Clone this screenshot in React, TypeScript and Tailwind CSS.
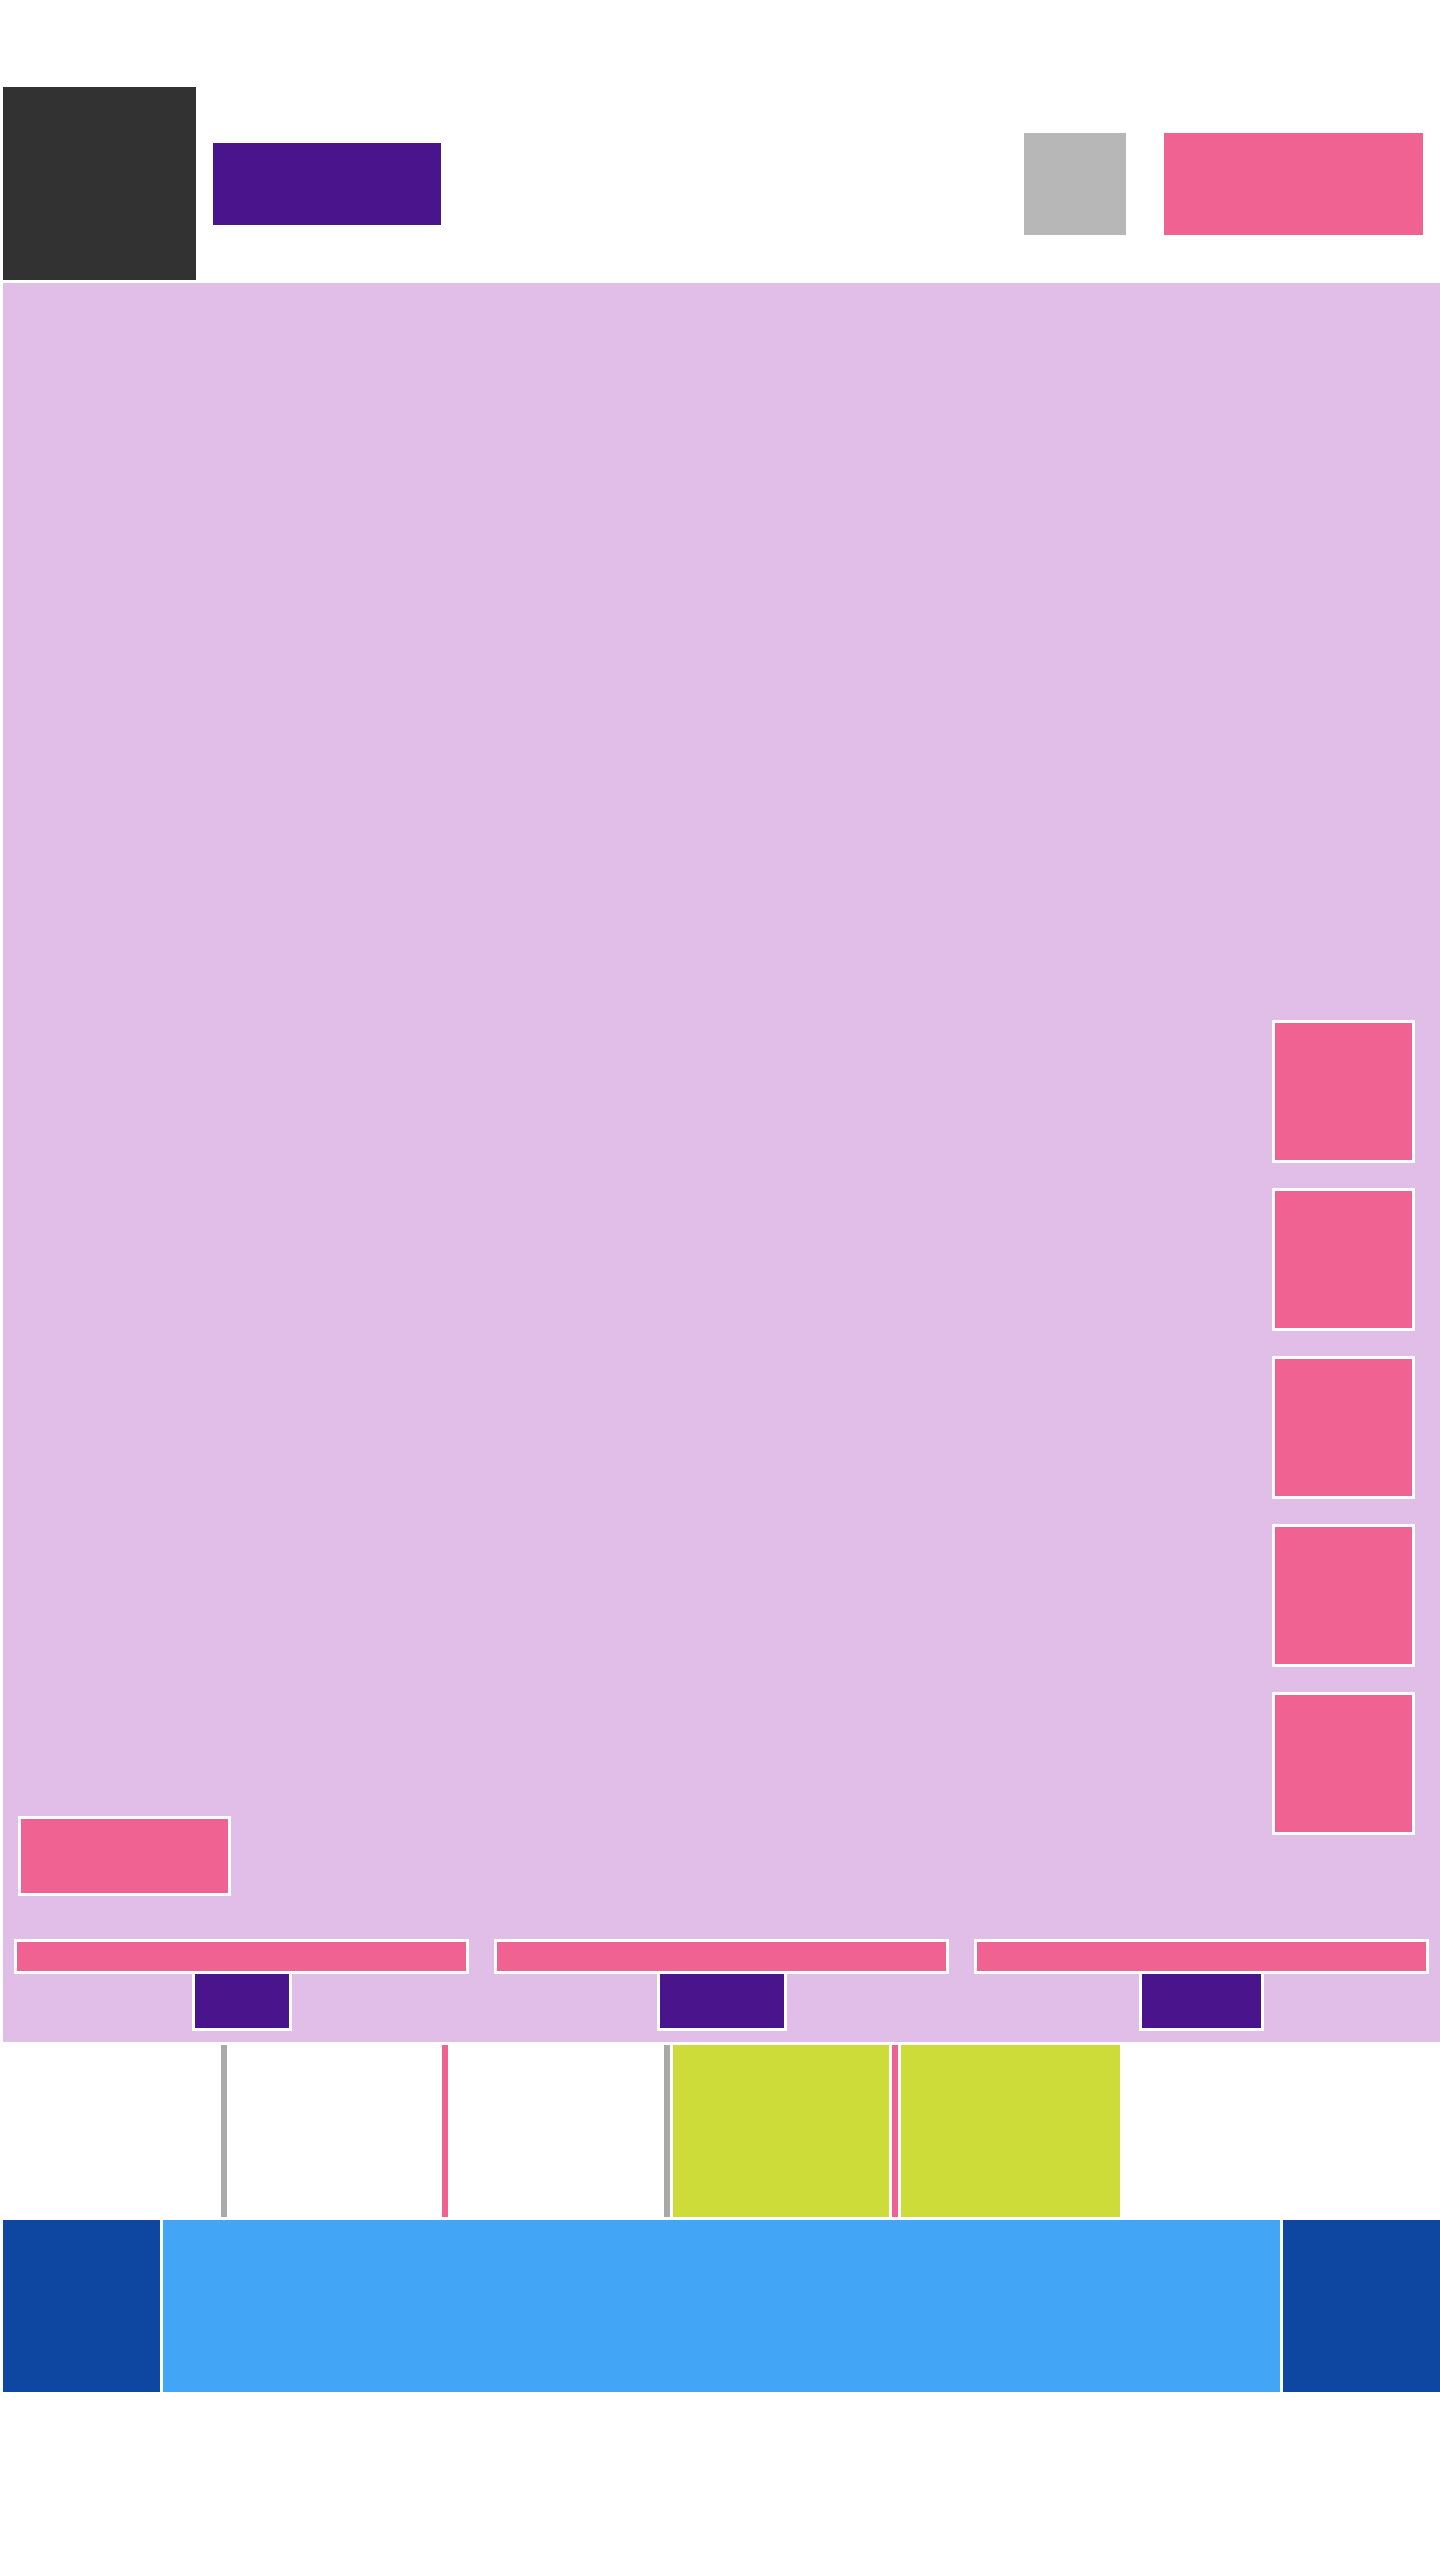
import React from 'react';

// Colour blocks laid out as a wireframe
const SQUARES = [0, 1, 2, 3, 4];
const BARS = [
  { id: 'a', tab: 'w-[100px]' },
  { id: 'b', tab: 'w-[130px]' },
  { id: 'c', tab: 'w-[125px]' },
];

function Header() {
  return (
    <div className="flex items-center h-[193px]">
      <div className="w-[193px] h-[193px] bg-[#323232] shrink-0" />
      <div className="ml-[17px] w-[228px] h-[82px] bg-[#4a148c]" />
      <div className="ml-auto w-[102px] h-[102px] bg-[#b7b7b7]" />
      <div className="ml-[38px] mr-[17px] w-[259px] h-[102px] bg-[#f06292]" />
    </div>
  );
}

function Stage() {
  return (
    <div className="bg-[#e1bee7] h-[1759px] flex flex-col pt-[737px]">
      <div className="flex items-start justify-between pl-[15px] pr-[25px]">
        <div className="mt-[796px] w-[213px] h-[80px] bg-[#f06292] border-[3px] border-white" />
        <div className="flex flex-col gap-[25px]">
          {SQUARES.map((i) => (
            <div key={i} className="w-[143px] h-[143px] bg-[#f06292] border-[3px] border-white" />
          ))}
        </div>
      </div>

      {/* bottom tabs */}
      <div className="mt-[43px] px-[11px] flex gap-[25px]">
        {BARS.map((b) => (
          <div key={b.id} className="flex-1 flex flex-col items-center">
            <div className="w-full h-[35px] bg-[#f06292] border-[3px] border-white" />
            <div className={`${b.tab} h-[57px] bg-[#4a148c] border-[3px] border-t-0 border-white`} />
          </div>
        ))}
      </div>
    </div>
  );
}

function Strip() {
  return (
    <div className="h-[172px] flex bg-white">
      <div className="ml-[218px] w-[6px] bg-[#aaaaaa]" />
      <div className="ml-[215px] w-[6px] bg-[#f06292]" />
      <div className="ml-[216px] w-[6px] bg-[#a8a8a8]" />
      <div className="ml-[3px] w-[216px] bg-[#cddc39]" />
      <div className="ml-[3px] w-[6px] bg-[#f06292]" />
      <div className="ml-[3px] w-[219px] bg-[#cddc39]" />
    </div>
  );
}

function Footer() {
  return (
    <div className="h-[172px] flex gap-[3px]">
      <div className="w-[157px] bg-[#0d47a1]" />
      <div className="flex-1 bg-[#42a5f5]" />
      <div className="w-[157px] bg-[#0d47a1]" />
    </div>
  );
}

export default function App() {
  return (
    <div className="min-h-[2560px] w-[1440px] bg-white pl-[3px] pt-[87px] font-['Liberation_Sans',sans-serif]">
      <div className="flex flex-col gap-[3px]">
        <Header />
        <Stage />
        <Strip />
        <Footer />
      </div>
    </div>
  );
}
